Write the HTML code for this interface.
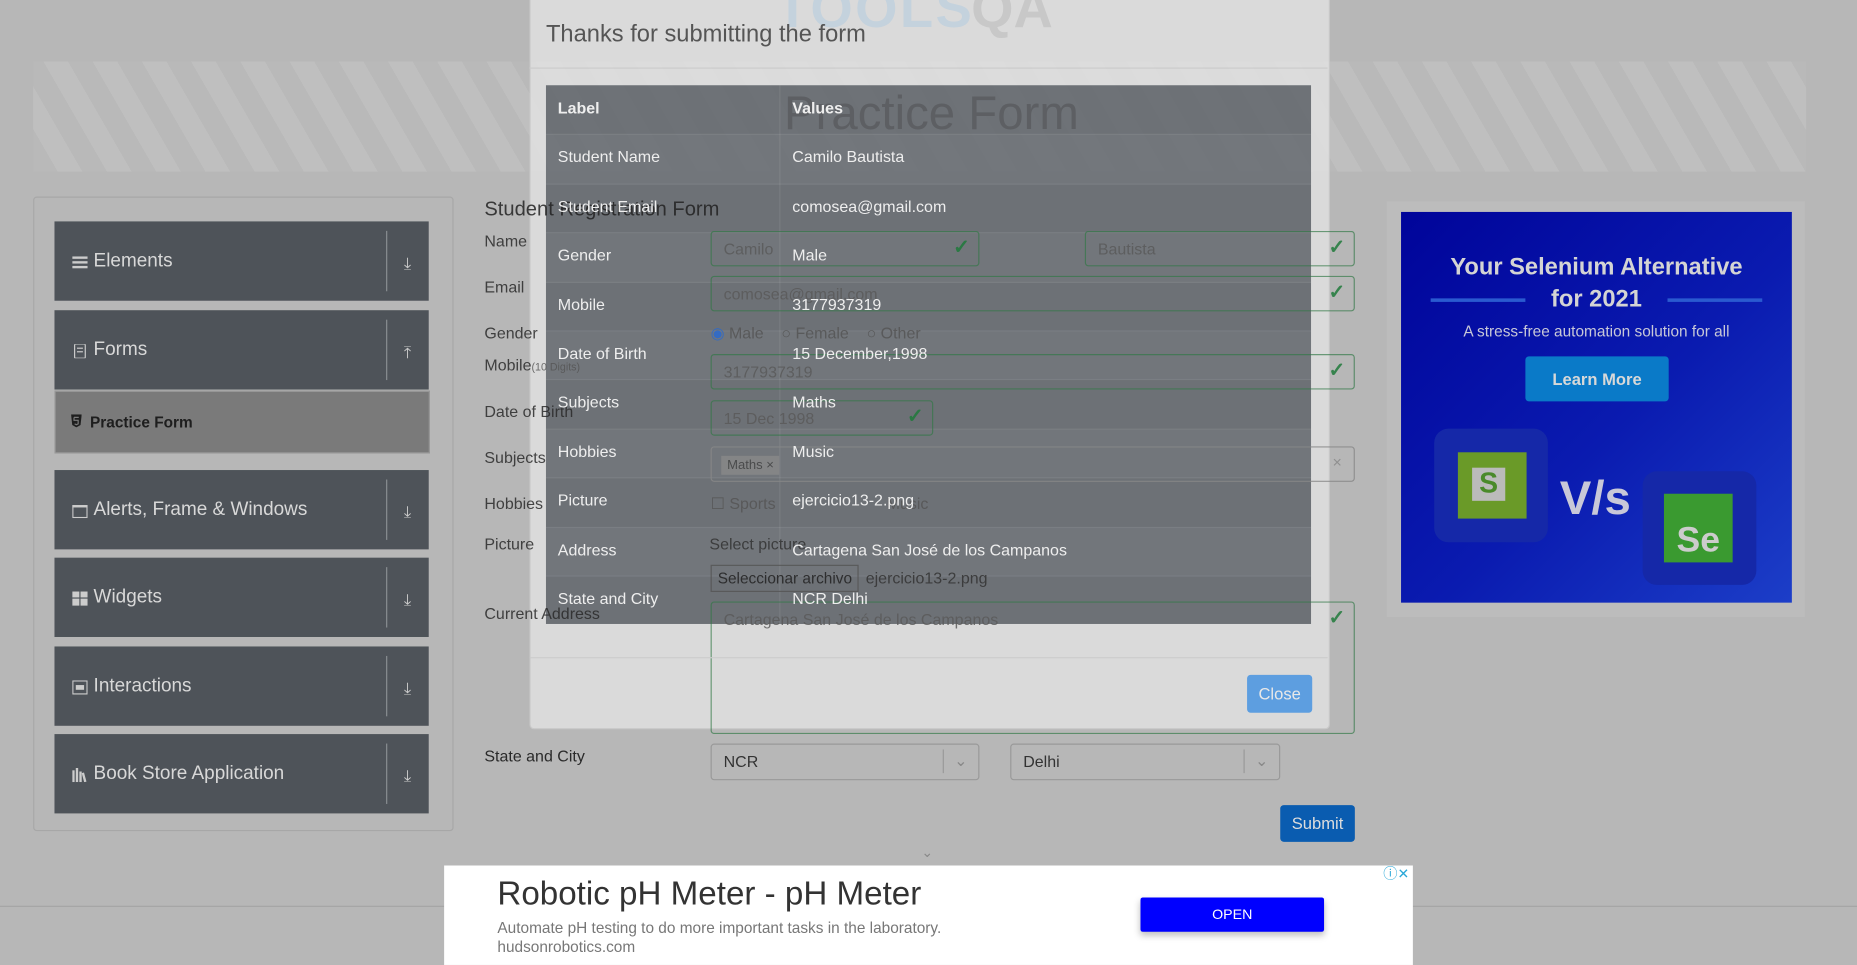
<!DOCTYPE html>
<html><head><meta charset="utf-8"><style>
html,body{margin:0;padding:0;width:1857px;height:965px;overflow:hidden;background:#b7b7b7;font-family:"Liberation Sans",sans-serif}
#w{position:absolute;left:0;top:0;width:1568px;height:815px;transform:scale(1.18431,1.1840);transform-origin:0 0}
.a{position:absolute}
.t{position:absolute;white-space:nowrap}
.menu{position:absolute;left:46px;width:316px;background:#4e5359;color:#d8d8d8;font-size:16px}
.menu .l{position:absolute;left:33px;top:50%;transform:translateY(-50%)}
.menu .sep{position:absolute;left:280px;top:8px;bottom:8px;width:1px;background:#8a8e92}
.menu .ar{position:absolute;left:295px;top:50%;transform:translateY(-40%);font-size:14px;color:#ccc}
.menu .ic{position:absolute;left:15px;top:50%;transform:translateY(-45%);width:13px;height:12px}
.lab{position:absolute;left:409px;font-size:13.5px;color:#2a2a2a}
.inp{position:absolute;border:1px solid rgba(50,120,70,0.8);border-radius:3px;height:30px;box-sizing:border-box;font-size:13.5px;color:#5a5a5a;padding:7px 10px}
.ck{position:absolute;right:7px;top:3px;color:#1f7a3a;font-size:17px;font-weight:bold}
.row{position:absolute;left:0;width:646px;height:41.4px;border-top:1px solid rgba(255,255,255,0.06)}
.row span{position:absolute;top:12px;font-size:13.5px;color:#eee}
.row span.k{left:10px}.row span.v{left:208px}
.fm{opacity:0.85}
</style></head><body><div id="w">
<div class="a" style="left:28px;top:52px;width:1497px;height:93px;background:repeating-linear-gradient(60deg,#b9b9b9 0 18px,#bfbfbf 18px 36px)"></div>
<div class="a" style="left:0;top:765px;width:1568px;height:1px;background:#a5a5a5"></div>
<div class="a" style="left:28px;top:166px;width:353px;height:534px;border:1px solid #a7a7a7;border-radius:3px"></div>
<div class="menu" style="top:187px;height:67px"><svg class="ic" viewBox="0 0 13 12"><rect y="1" width="13" height="2" fill="#ccc"/><rect y="5" width="13" height="2" fill="#ccc"/><rect y="9" width="13" height="2" fill="#ccc"/></svg><span class="l">Elements</span><div class="sep"></div><span class="ar">⤓</span></div>
<div class="menu" style="top:262px;height:67px"><svg class="ic" viewBox="0 0 13 12"><rect x="2" y="0" width="9" height="12" rx="1" fill="none" stroke="#ccc"/><rect x="4" y="3" width="5" height="1" fill="#ccc"/><rect x="4" y="6" width="5" height="1" fill="#ccc"/></svg><span class="l">Forms</span><div class="sep"></div><span class="ar">⤒</span></div>
<div class="a" style="left:46px;top:330px;width:315px;height:51px;background:#7a7a7a;border:1px solid #999"><svg class="a" style="left:13px;top:19px" width="9" height="11" viewBox="0 0 9 11"><path d="M0 0H9L8 9L4.5 11L1 9Z" fill="#1e1e1e"/><path d="M2.5 2.5H6.5M2.5 2.5V5H6V8L4.5 8.7L3 8" stroke="#7a7a7a" fill="none"/></svg><span class="t" style="left:29px;top:18px;font-size:13px;font-weight:bold;color:#1e1e1e">Practice Form</span></div>
<div class="menu" style="top:397px;height:67px"><svg class="ic" viewBox="0 0 13 12"><rect x="0.5" y="1.5" width="12" height="10" fill="none" stroke="#ccc"/><rect x="0" y="1" width="13" height="2" fill="#ccc"/></svg><span class="l">Alerts, Frame &amp; Windows</span><div class="sep"></div><span class="ar">⤓</span></div>
<div class="menu" style="top:471px;height:67px"><svg class="ic" viewBox="0 0 13 12"><rect width="6" height="5" fill="#ccc"/><rect x="7" width="6" height="5" fill="#ccc"/><rect y="6" width="6" height="6" fill="#ccc"/><rect x="7" y="6" width="6" height="6" fill="#ccc"/></svg><span class="l">Widgets</span><div class="sep"></div><span class="ar">⤓</span></div>
<div class="menu" style="top:546px;height:67px"><svg class="ic" viewBox="0 0 13 12"><rect x="0.5" y="0.5" width="12" height="11" fill="none" stroke="#ccc"/><rect x="3" y="4" width="7" height="4" fill="#ccc"/></svg><span class="l">Interactions</span><div class="sep"></div><span class="ar">⤓</span></div>
<div class="menu" style="top:620px;height:67px"><svg class="ic" viewBox="0 0 13 12"><rect x="0" y="2" width="2" height="10" fill="#ccc"/><rect x="3" y="0" width="2" height="12" fill="#ccc"/><rect x="6" y="3" width="2" height="9" fill="#ccc"/><rect x="9" y="4" width="2" height="8" fill="#ccc" transform="rotate(-15 10 8)"/></svg><span class="l">Book Store Application</span><div class="sep"></div><span class="ar">⤓</span></div>
<div class="a" style="left:1171px;top:170px;width:353px;height:351px;background:#bcbcbc"></div>
<div class="a" style="left:1183px;top:179px;width:330px;height:330px;background:linear-gradient(135deg,#00049a 0%,#0a1bb0 55%,#1c3ec8 100%);overflow:hidden">
<div class="t" style="left:0;width:330px;top:34px;text-align:center;font-size:20px;font-weight:bold;color:#d4d4d4;line-height:27px;white-space:normal">Your Selenium Alternative<br>for 2021</div>
<div class="a" style="left:25px;top:73px;width:80px;height:3px;background:#2a5ad0"></div><div class="a" style="left:225px;top:73px;width:80px;height:3px;background:#2a5ad0"></div>
<div class="t" style="left:0;width:330px;top:93px;text-align:center;font-size:13px;color:#c8c8d8">A stress-free automation solution for all</div>
<div class="a" style="left:105px;top:122px;width:121px;height:38px;background:#0a7ac8;border-radius:3px;color:#d8d8d8;font-size:14px;font-weight:bold;text-align:center;line-height:38px">Learn More</div>
<div class="a" style="left:28px;top:183px;width:96px;height:96px;background:#1528a8;border-radius:12px"></div>
<div class="a" style="left:48px;top:203px;width:58px;height:56px;background:#6a9a28"></div>
<div class="a" style="left:60px;top:216px;width:28px;height:28px;background:#bbb;color:#4a8a2a;font-weight:bold;font-size:24px;text-align:center;line-height:28px">S</div>
<div class="t" style="left:134px;top:220px;font-size:40px;font-weight:bold;color:#c8c8d8">V/s</div>
<div class="a" style="left:204px;top:219px;width:96px;height:96px;background:#1528a8;border-radius:12px"></div>
<div class="a" style="left:222px;top:238px;width:58px;height:58px;background:#3a9a30;color:#ccc;font-weight:bold;font-size:30px;line-height:80px;text-align:center">Se</div>
</div>
<span class="t" style="left:655px;top:-20px;font-size:46px;font-weight:bold;color:#6a9ac0;letter-spacing:2px">TOOLS</span>
<span class="t" style="left:820px;top:-20px;font-size:46px;font-weight:bold;color:#777">QA</span>
<!-- modal -->
<div class="a" style="left:447px;top:0;width:674px;height:615px;background:rgba(232,232,232,0.72);border:1px solid #c8c8c8;border-top:none;border-radius:0 0 4px 4px"></div>
<span class="t" style="left:461px;top:18px;font-size:20px;color:#555">Thanks for submitting the form</span>
<div class="a" style="left:447px;top:57px;width:674px;height:1px;background:#ccc"></div>
<div class="a" style="left:461px;top:72px;width:646px;height:455px;background:rgba(100,104,110,0.92)">
<div class="a" style="left:197px;top:0;width:1px;height:455px;background:rgba(255,255,255,0.08)"></div>
<div class="row" style="top:41.4px;background:rgba(255,255,255,0.04)"></div>
<div class="row" style="top:82.8px"></div>
<div class="row" style="top:124.2px;background:rgba(255,255,255,0.04)"></div>
<div class="row" style="top:165.6px"></div>
<div class="row" style="top:207px;background:rgba(255,255,255,0.04)"></div>
<div class="row" style="top:248.4px"></div>
<div class="row" style="top:289.8px;background:rgba(255,255,255,0.04)"></div>
<div class="row" style="top:331.2px"></div>
<div class="row" style="top:372.6px;background:rgba(255,255,255,0.04)"></div>
<div class="row" style="top:414px"></div>
</div>
<!-- underlying form drawn over -->
<div class="fm">
<span class="t" style="left:662px;top:74px;font-size:40px;color:#5a5d60">Practice Form</span>
<span class="t" style="left:409px;top:167px;font-size:17px;color:#222">Student Registration Form</span>
<span class="lab" style="top:196px">Name</span>
<span class="lab" style="top:235px">Email</span>
<span class="lab" style="top:274px">Gender</span>
<span class="lab" style="top:301px">Mobile<small style="font-size:9px;color:#555">(10 Digits)</small></span>
<span class="lab" style="top:340px">Date of Birth</span>
<span class="lab" style="top:379px">Subjects</span>
<span class="lab" style="top:418px">Hobbies</span>
<span class="lab" style="top:452px">Picture</span>
<span class="lab" style="top:511px">Current Address</span>
<div class="inp" style="left:600px;top:195px;width:227px">Camilo<span class="ck">✓</span></div>
<div class="inp" style="left:916px;top:195px;width:228px">Bautista<span class="ck">✓</span></div>
<div class="inp" style="left:600px;top:233px;width:544px">comosea@gmail.com<span class="ck">✓</span></div>
<span class="t" style="left:600px;top:274px;font-size:13.5px;color:#555"><span style="color:#2a6ad0">◉</span> Male &nbsp;&nbsp; ○ Female &nbsp;&nbsp; ○ Other</span>
<div class="inp" style="left:600px;top:299px;width:544px">3177937319<span class="ck">✓</span></div>
<div class="inp" style="left:600px;top:338px;width:188px">15 Dec 1998<span class="ck">✓</span></div>
<div class="inp" style="left:600px;top:377px;width:544px;border-color:#888;padding:6px 8px"><span style="background:#888;font-size:11px;padding:2px 5px;color:#444">Maths ×</span><span style="position:absolute;right:10px;top:5px;color:#888">×</span></div>
<span class="t" style="left:600px;top:418px;font-size:13.5px;color:#555">☐ Sports &nbsp;&nbsp;&nbsp;&nbsp;&nbsp;&nbsp;&nbsp;&nbsp;&nbsp;&nbsp;&nbsp;&nbsp;&nbsp;&nbsp;&nbsp;&nbsp;&nbsp;&nbsp;&nbsp;&nbsp;&nbsp;&nbsp;&nbsp; Music</span>
<span class="t" style="left:599px;top:452px;font-size:13.5px;color:#333">Select picture</span>
<div class="a" style="left:600px;top:477px;width:125px;height:23px;border:1px solid #555;font-size:13px;color:#222;box-sizing:border-box;padding:3px 5px;white-space:nowrap">Seleccionar archivo</div>
<span class="t" style="left:731px;top:481px;font-size:13.5px;color:#333">ejercicio13-2.png</span>
<div class="inp" style="left:600px;top:508px;width:544px;height:112px">Cartagena San José de los Campanos<span class="ck">✓</span></div>
</div>
<span class="lab" style="top:631px">State and City</span>
<div class="inp" style="left:600px;top:628px;width:227px;height:31px;border-color:#999;color:#333">NCR<span style="position:absolute;left:195px;top:4px;height:20px;border-left:1px solid #999"></span><span style="position:absolute;right:9px;top:6px;color:#888">⌄</span></div>
<div class="inp" style="left:853px;top:628px;width:228px;height:31px;border-color:#999;color:#333">Delhi<span style="position:absolute;left:196px;top:4px;height:20px;border-left:1px solid #999"></span><span style="position:absolute;right:9px;top:6px;color:#888">⌄</span></div>
<div class="a" style="left:1081px;top:680px;width:63px;height:31px;background:#0a5cb0;border-radius:3px;color:#ddd;font-size:14px;text-align:center;line-height:31px">Submit</div>
<span class="t" style="left:778px;top:713px;font-size:12px;color:#888">⌄</span>
<!-- table text -->
<div class="a" style="left:461px;top:72px;width:646px;height:455px">
<div class="row" style="top:0;border:none"><span class="k" style="font-weight:bold">Label</span><span class="v" style="font-weight:bold">Values</span></div>
<div class="row" style="top:41.4px;border:none"><span class="k">Student Name</span><span class="v">Camilo Bautista</span></div>
<div class="row" style="top:82.8px;border:none"><span class="k">Student Email</span><span class="v">comosea@gmail.com</span></div>
<div class="row" style="top:124.2px;border:none"><span class="k">Gender</span><span class="v">Male</span></div>
<div class="row" style="top:165.6px;border:none"><span class="k">Mobile</span><span class="v">3177937319</span></div>
<div class="row" style="top:207px;border:none"><span class="k">Date of Birth</span><span class="v">15 December,1998</span></div>
<div class="row" style="top:248.4px;border:none"><span class="k">Subjects</span><span class="v">Maths</span></div>
<div class="row" style="top:289.8px;border:none"><span class="k">Hobbies</span><span class="v">Music</span></div>
<div class="row" style="top:331.2px;border:none"><span class="k">Picture</span><span class="v">ejercicio13-2.png</span></div>
<div class="row" style="top:372.6px;border:none"><span class="k">Address</span><span class="v">Cartagena San José de los Campanos</span></div>
<div class="row" style="top:414px;border:none"><span class="k">State and City</span><span class="v">NCR Delhi</span></div>
</div>
<div class="a" style="left:447px;top:555px;width:674px;height:1px;background:#ccc"></div>
<div class="a" style="left:1053px;top:570px;width:55px;height:32px;background:#5d9ee0;border-radius:3px;color:#e8e8e8;font-size:14px;text-align:center;line-height:32px">Close</div>
<div class="a" style="left:375px;top:731px;width:818px;height:84px;background:#fff">
<span class="t" style="left:45px;top:8px;font-size:28px;color:#333">Robotic pH Meter - pH Meter</span>
<span class="t" style="left:45px;top:45px;font-size:13px;color:#777">Automate pH testing to do more important tasks in the laboratory.</span>
<span class="t" style="left:45px;top:61px;font-size:13px;color:#777">hudsonrobotics.com</span>
<div class="a" style="left:588px;top:27px;width:155px;height:29px;background:#0000ff;border-radius:2px;color:#fff;font-size:12px;text-align:center;line-height:29px;box-shadow:0 3px 6px rgba(0,0,0,.25)">OPEN</div>
<span class="t" style="left:793px;top:-2px;font-size:12px;color:#2aa8d8">ⓘ✕</span>
</div>
</div></body></html>
